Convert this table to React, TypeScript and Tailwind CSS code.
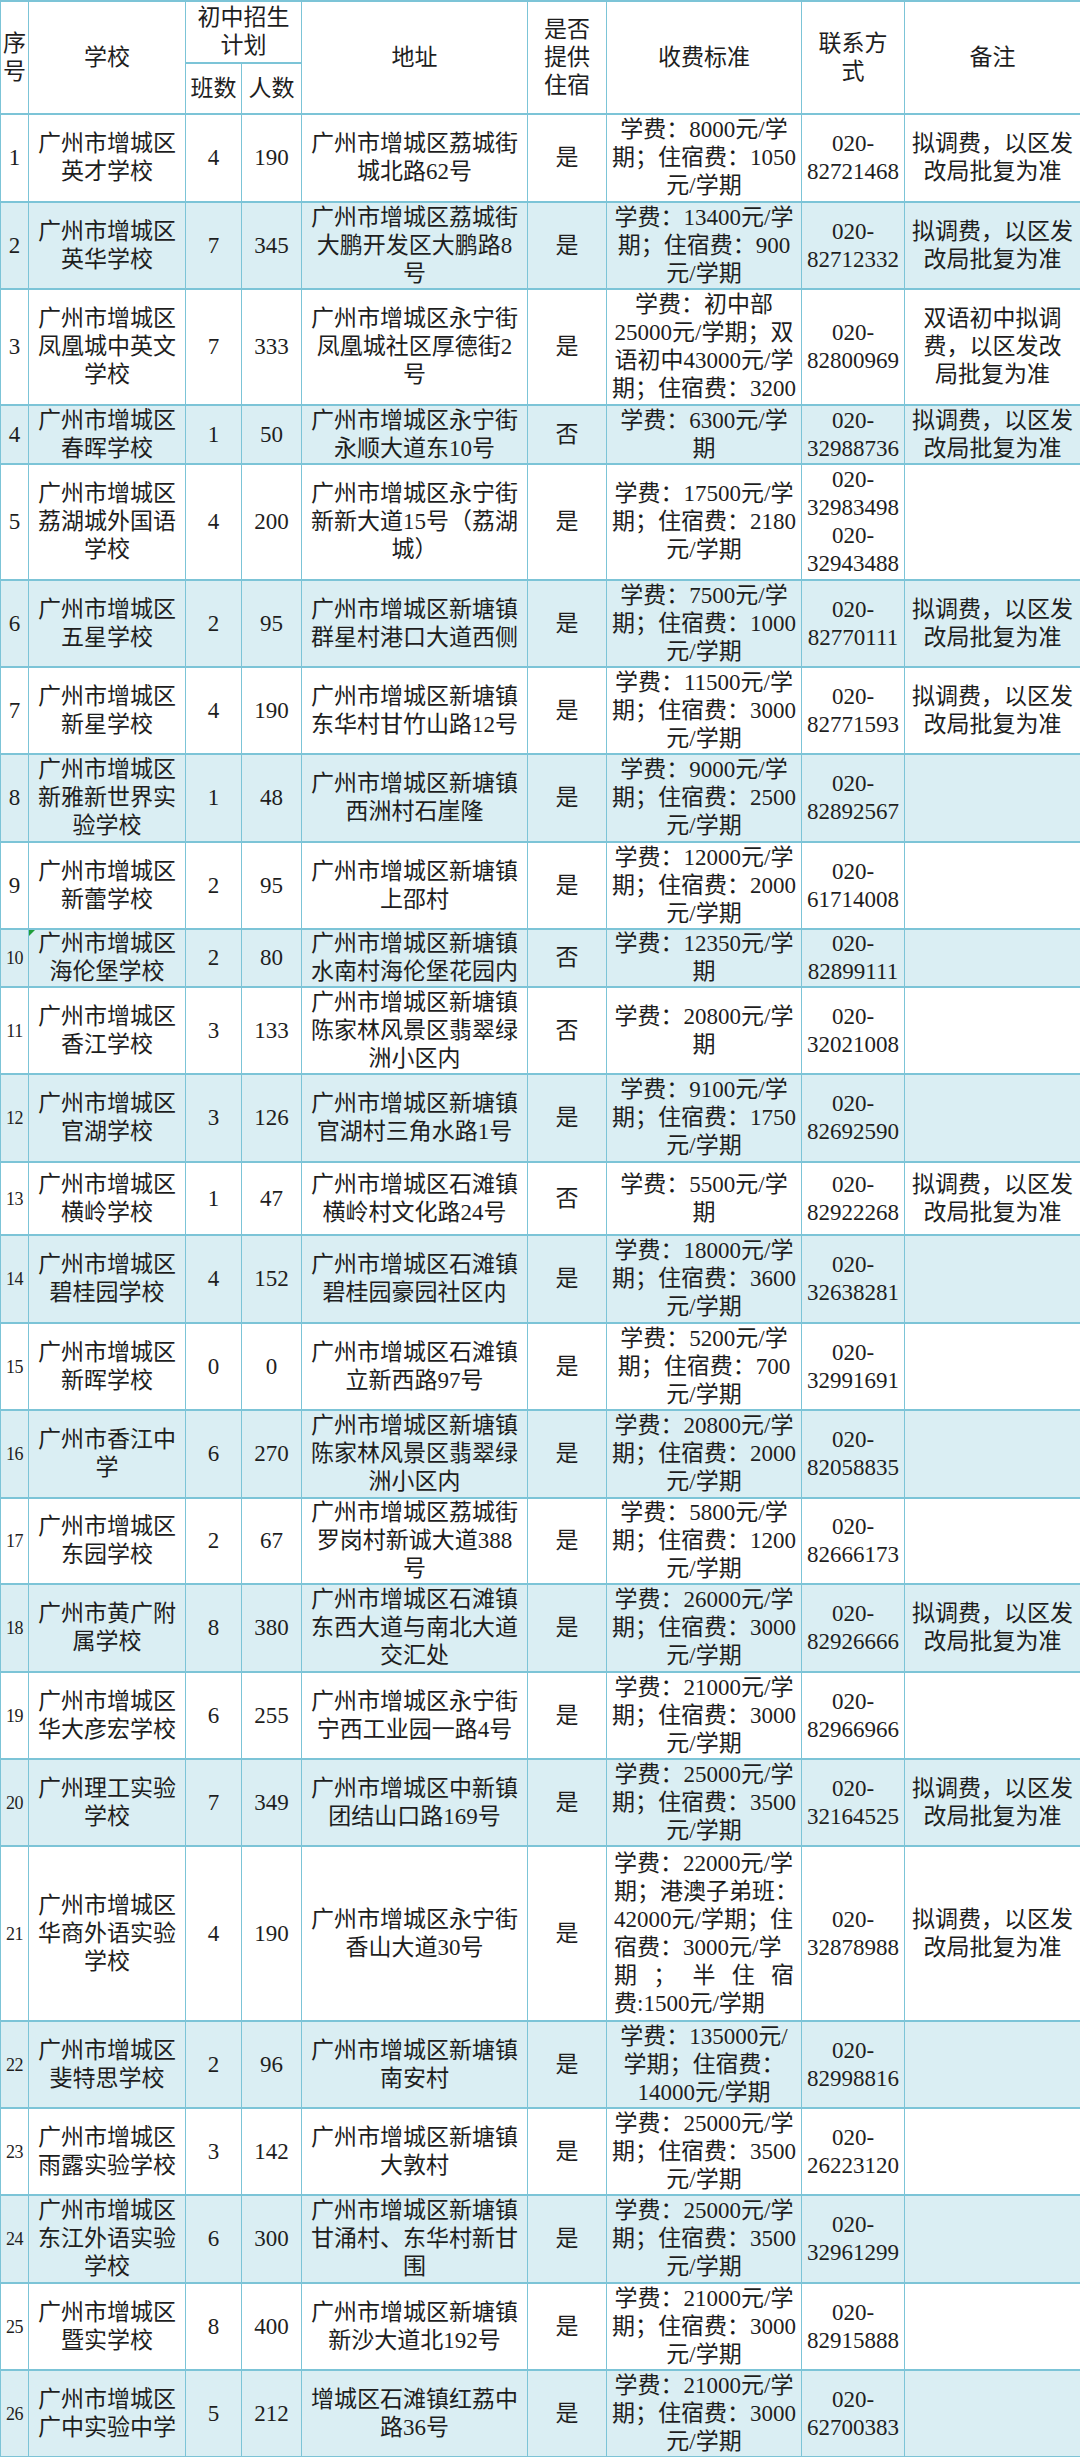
import React from 'react';

type Row = {
  no: number;
  school: string[];
  classes: string;
  people: string;
  address: string[];
  board: string;
  fee: string[];
  phone: string[];
  note: string[];
  h: number;
};

const STD_NOTE = ['拟调费，以区发', '改局批复为准'];
const STD_FEE = (a: string, b: string) => [`学费：${a}元/学`, `期；住宿费：${b}`, '元/学期'];

const rows: Row[] = [
  { no: 1, school: ['广州市增城区', '英才学校'], classes: '4', people: '190', address: ['广州市增城区荔城街', '城北路62号'], board: '是', fee: STD_FEE('8000', '1050'), phone: ['020-', '82721468'], note: STD_NOTE, h: 88 },
  { no: 2, school: ['广州市增城区', '英华学校'], classes: '7', people: '345', address: ['广州市增城区荔城街', '大鹏开发区大鹏路8', '号'], board: '是', fee: STD_FEE('13400', '900'), phone: ['020-', '82712332'], note: STD_NOTE, h: 87 },
  { no: 3, school: ['广州市增城区', '凤凰城中英文', '学校'], classes: '7', people: '333', address: ['广州市增城区永宁街', '凤凰城社区厚德街2', '号'], board: '是', fee: ['学费：初中部', '25000元/学期；双', '语初中43000元/学', '期；住宿费：3200'], phone: ['020-', '82800969'], note: ['双语初中拟调', '费，以区发改', '局批复为准'], h: 116 },
  { no: 4, school: ['广州市增城区', '春晖学校'], classes: '1', people: '50', address: ['广州市增城区永宁街', '永顺大道东10号'], board: '否', fee: ['学费：6300元/学', '期'], phone: ['020-', '32988736'], note: STD_NOTE, h: 59 },
  { no: 5, school: ['广州市增城区', '荔湖城外国语', '学校'], classes: '4', people: '200', address: ['广州市增城区永宁街', '新新大道15号（荔湖', '城）'], board: '是', fee: STD_FEE('17500', '2180'), phone: ['020-', '32983498', '020-', '32943488'], note: [], h: 116 },
  { no: 6, school: ['广州市增城区', '五星学校'], classes: '2', people: '95', address: ['广州市增城区新塘镇', '群星村港口大道西侧'], board: '是', fee: STD_FEE('7500', '1000'), phone: ['020-', '82770111'], note: STD_NOTE, h: 87 },
  { no: 7, school: ['广州市增城区', '新星学校'], classes: '4', people: '190', address: ['广州市增城区新塘镇', '东华村甘竹山路12号'], board: '是', fee: STD_FEE('11500', '3000'), phone: ['020-', '82771593'], note: STD_NOTE, h: 87 },
  { no: 8, school: ['广州市增城区', '新雅新世界实', '验学校'], classes: '1', people: '48', address: ['广州市增城区新塘镇', '西洲村石崖隆'], board: '是', fee: STD_FEE('9000', '2500'), phone: ['020-', '82892567'], note: [], h: 88 },
  { no: 9, school: ['广州市增城区', '新蕾学校'], classes: '2', people: '95', address: ['广州市增城区新塘镇', '上邵村'], board: '是', fee: STD_FEE('12000', '2000'), phone: ['020-', '61714008'], note: [], h: 87 },
  { no: 10, school: ['广州市增城区', '海伦堡学校'], classes: '2', people: '80', address: ['广州市增城区新塘镇', '水南村海伦堡花园内'], board: '否', fee: ['学费：12350元/学', '期'], phone: ['020-', '82899111'], note: [], h: 58 },
  { no: 11, school: ['广州市增城区', '香江学校'], classes: '3', people: '133', address: ['广州市增城区新塘镇', '陈家林风景区翡翠绿', '洲小区内'], board: '否', fee: ['学费：20800元/学', '期'], phone: ['020-', '32021008'], note: [], h: 87 },
  { no: 12, school: ['广州市增城区', '官湖学校'], classes: '3', people: '126', address: ['广州市增城区新塘镇', '官湖村三角水路1号'], board: '是', fee: STD_FEE('9100', '1750'), phone: ['020-', '82692590'], note: [], h: 88 },
  { no: 13, school: ['广州市增城区', '横岭学校'], classes: '1', people: '47', address: ['广州市增城区石滩镇', '横岭村文化路24号'], board: '否', fee: ['学费：5500元/学', '期'], phone: ['020-', '82922268'], note: STD_NOTE, h: 73 },
  { no: 14, school: ['广州市增城区', '碧桂园学校'], classes: '4', people: '152', address: ['广州市增城区石滩镇', '碧桂园豪园社区内'], board: '是', fee: STD_FEE('18000', '3600'), phone: ['020-', '32638281'], note: [], h: 88 },
  { no: 15, school: ['广州市增城区', '新晖学校'], classes: '0', people: '0', address: ['广州市增城区石滩镇', '立新西路97号'], board: '是', fee: STD_FEE('5200', '700'), phone: ['020-', '32991691'], note: [], h: 87 },
  { no: 16, school: ['广州市香江中', '学'], classes: '6', people: '270', address: ['广州市增城区新塘镇', '陈家林风景区翡翠绿', '洲小区内'], board: '是', fee: STD_FEE('20800', '2000'), phone: ['020-', '82058835'], note: [], h: 88 },
  { no: 17, school: ['广州市增城区', '东园学校'], classes: '2', people: '67', address: ['广州市增城区荔城街', '罗岗村新诚大道388', '号'], board: '是', fee: STD_FEE('5800', '1200'), phone: ['020-', '82666173'], note: [], h: 86 },
  { no: 18, school: ['广州市黄广附', '属学校'], classes: '8', people: '380', address: ['广州市增城区石滩镇', '东西大道与南北大道', '交汇处'], board: '是', fee: STD_FEE('26000', '3000'), phone: ['020-', '82926666'], note: STD_NOTE, h: 88 },
  { no: 19, school: ['广州市增城区', '华大彦宏学校'], classes: '6', people: '255', address: ['广州市增城区永宁街', '宁西工业园一路4号'], board: '是', fee: STD_FEE('21000', '3000'), phone: ['020-', '82966966'], note: [], h: 87 },
  { no: 20, school: ['广州理工实验', '学校'], classes: '7', people: '349', address: ['广州市增城区中新镇', '团结山口路169号'], board: '是', fee: STD_FEE('25000', '3500'), phone: ['020-', '32164525'], note: STD_NOTE, h: 87 },
  { no: 21, school: ['广州市增城区', '华商外语实验', '学校'], classes: '4', people: '190', address: ['广州市增城区永宁街', '香山大道30号'], board: '是', fee: [], phone: ['020-', '32878988'], note: STD_NOTE, h: 175 },
  { no: 22, school: ['广州市增城区', '斐特思学校'], classes: '2', people: '96', address: ['广州市增城区新塘镇', '南安村'], board: '是', fee: ['学费：135000元/', '学期；住宿费：', '14000元/学期'], phone: ['020-', '82998816'], note: [], h: 87 },
  { no: 23, school: ['广州市增城区', '雨露实验学校'], classes: '3', people: '142', address: ['广州市增城区新塘镇', '大敦村'], board: '是', fee: STD_FEE('25000', '3500'), phone: ['020-', '26223120'], note: [], h: 87 },
  { no: 24, school: ['广州市增城区', '东江外语实验', '学校'], classes: '6', people: '300', address: ['广州市增城区新塘镇', '甘涌村、东华村新甘', '围'], board: '是', fee: STD_FEE('25000', '3500'), phone: ['020-', '32961299'], note: [], h: 88 },
  { no: 25, school: ['广州市增城区', '暨实学校'], classes: '8', people: '400', address: ['广州市增城区新塘镇', '新沙大道北192号'], board: '是', fee: STD_FEE('21000', '3000'), phone: ['020-', '82915888'], note: [], h: 87 },
  { no: 26, school: ['广州市增城区', '广中实验中学'], classes: '5', people: '212', address: ['增城区石滩镇红荔中', '路36号'], board: '是', fee: STD_FEE('21000', '3000'), phone: ['020-', '62700383'], note: [], h: 87 },
];

const cell = 'border-x border-y-2 border-[#7cc4d7] p-0 text-center align-middle';

const Lines = ({ lines }: { lines: string[] }) => (
  <>
    {lines.map((l, i) => (
      <div key={i} className="whitespace-nowrap">
        {l}
      </div>
    ))}
  </>
);

// row 21 has the long fee text, laid out flush left with one spaced-out line
const Fee21 = () => (
  <div className="px-[7px] text-left">
    <div className="whitespace-nowrap">学费：22000元/学</div>
    <div className="whitespace-nowrap">期；港澳子弟班：</div>
    <div className="whitespace-nowrap">42000元/学期；住</div>
    <div className="whitespace-nowrap">宿费：3000元/学</div>
    <div className="flex justify-between">
      <span>期</span>
      <span>；</span>
      <span>半</span>
      <span>住</span>
      <span>宿</span>
    </div>
    <div className="whitespace-nowrap">费:1500元/学期</div>
  </div>
);

export default function App() {
  return (
    <div className="w-[1080px] bg-white text-[23px] leading-[28px] text-[#1e1e1e] [font-family:'Liberation_Serif','Noto_Sans_CJK_SC',serif]">
      <table className="w-[1080px] table-fixed border-collapse">
        <colgroup>
          <col className="w-[28px]" />
          <col className="w-[157px]" />
          <col className="w-[56px]" />
          <col className="w-[60px]" />
          <col className="w-[226px]" />
          <col className="w-[79px]" />
          <col className="w-[195px]" />
          <col className="w-[103px]" />
          <col className="w-[176px]" />
        </colgroup>
        <thead>
          <tr className="h-[62px]">
            <th rowSpan={2} className={`${cell} font-normal`}>
              <div>序</div>
              <div>号</div>
            </th>
            <th rowSpan={2} className={`${cell} font-normal`}>学校</th>
            <th colSpan={2} className={`${cell} font-normal`}>
              <div>初中招生</div>
              <div>计划</div>
            </th>
            <th rowSpan={2} className={`${cell} font-normal`}>地址</th>
            <th rowSpan={2} className={`${cell} font-normal`}>
              <div>是否</div>
              <div>提供</div>
              <div>住宿</div>
            </th>
            <th rowSpan={2} className={`${cell} font-normal`}>收费标准</th>
            <th rowSpan={2} className={`${cell} font-normal`}>
              <div>联系方</div>
              <div>式</div>
            </th>
            <th rowSpan={2} className={`${cell} font-normal`}>备注</th>
          </tr>
          <tr className="h-[51px]">
            <th className={`${cell} font-normal`}>班数</th>
            <th className={`${cell} font-normal`}>人数</th>
          </tr>
        </thead>
        <tbody>
          {rows.map((r) => (
            <tr key={r.no} style={{ height: r.h }} className={r.no % 2 === 0 ? 'bg-[#daeef3]' : 'bg-white'}>
              <td className={`${cell} ${r.no >= 10 ? 'text-[18px] tracking-[-0.5px]' : ''}`}>{r.no}</td>
              <td className={`${cell} relative`}>
                {r.no === 10 && (
                  <span className="absolute left-0 top-0 h-0 w-0 border-r-[6px] border-t-[6px] border-r-transparent border-t-[#1e9e3a]" />
                )}
                <Lines lines={r.school} />
              </td>
              <td className={cell}>{r.classes}</td>
              <td className={cell}>{r.people}</td>
              <td className={cell}>
                <Lines lines={r.address} />
              </td>
              <td className={cell}>{r.board}</td>
              <td className={cell}>{r.no === 21 ? <Fee21 /> : <Lines lines={r.fee} />}</td>
              <td className={cell}>
                <Lines lines={r.phone} />
              </td>
              <td className={cell}>
                <Lines lines={r.note} />
              </td>
            </tr>
          ))}
        </tbody>
      </table>
    </div>
  );
}
